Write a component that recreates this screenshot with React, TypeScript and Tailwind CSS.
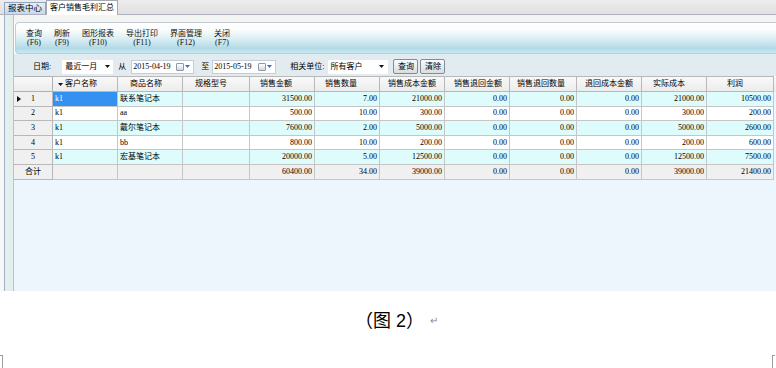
import React from "react";

const serif = "font-['Liberation_Serif','Noto_Sans_CJK_SC',serif]";

const cols = [
  { t: "客户名称", h: "pl-[5px]", sort: true, num: false },
  { t: "商品名称", h: "pl-[12px]", num: false },
  { t: "规格型号", h: "pl-[12px]", num: false },
  { t: "销售金额", h: "pl-[10px]", num: true },
  { t: "销售数量", h: "pl-[10px]", num: true },
  { t: "销售成本金额", h: "pl-[8px]", num: true },
  { t: "销售退回金额", h: "pl-[9px]", num: true },
  { t: "销售退回数量", h: "pl-[7px]", num: true },
  { t: "退回成本金额", h: "pl-[8px]", num: true },
  { t: "实际成本", h: "pl-[11px]", num: true },
  { t: "利润", h: "pl-[20px]", num: true },
];

const gridCols =
  "grid grid-cols-[39px_65px_65px_67px_65px_65px_65px_65px_67px_65px_65px_67px]";

const rows = [
  ["k1", "联系笔记本", "", "31500.00", "7.00", "21000.00", "0.00", "0.00", "0.00", "21000.00", "10500.00"],
  ["k1", "aa", "", "500.00", "10.00", "300.00", "0.00", "0.00", "0.00", "300.00", "200.00"],
  ["k1", "戴尔笔记本", "", "7600.00", "2.00", "5000.00", "0.00", "0.00", "0.00", "5000.00", "2600.00"],
  ["k1", "bb", "", "800.00", "10.00", "200.00", "0.00", "0.00", "0.00", "200.00", "600.00"],
  ["k1", "宏基笔记本", "", "20000.00", "5.00", "12500.00", "0.00", "0.00", "0.00", "12500.00", "7500.00"],
];
const total = ["", "", "", "60400.00", "34.00", "39000.00", "0.00", "0.00", "0.00", "39000.00", "21400.00"];

const tools = [
  ["查询", "(F6)"],
  ["刷新", "(F9)"],
  ["图形报表", "(F10)"],
  ["导出打印", "(F11)"],
  ["界面管理", "(F12)"],
  ["关闭", "(F7)"],
];

function Caret({ blue }: { blue?: boolean }) {
  return (
    <svg width="5" height="3" viewBox="0 0 5 3" className="shrink-0">
      <path d="M0 0h5L2.5 3z" fill={blue ? "#3a6fc8" : "#111"} />
    </svg>
  );
}

function DateBox({ v, w }: { v: string; w: string }) {
  return (
    <div className={`flex items-center h-[14px] bg-white border border-[#c4ccd6] ${w}`}>
      <span className="flex-1 pl-[1px]">{v}</span>
      <span className="w-[8px] h-[8px] border border-[#8e98a6] rounded-[1px] bg-[linear-gradient(to_bottom,#ffffff,#d4d8de)]" />
      <span className="ml-[1px] mr-[3px]">
        <Caret blue />
      </span>
    </div>
  );
}

function Row({ i, cells, sel, sum }: { i: number; cells: string[]; sel?: boolean; sum?: boolean }) {
  const bg = sum ? "bg-[#f0f0f0]" : i % 2 === 0 ? "bg-[#dffcfc]" : "bg-white";
  return (
    <div className={`${gridCols} h-[14.6px]`}>
      <div className="flex items-center bg-[#f0f0f0] border-r border-b border-[#b8b8b8]">
        <span className="w-[11px] pl-[3px] flex items-center">
          {sel && (
            <svg width="4" height="6" viewBox="0 0 4 6">
              <path d="M0 0l4 3-4 3z" fill="#111" />
            </svg>
          )}
        </span>
        <span className="flex-1 text-center">{sum ? "合计" : i + 1}</span>
        <span className="w-[11px]" />
      </div>
      {cells.map((c, j) => (
        <div
          key={j}
          className={`flex items-center whitespace-nowrap overflow-hidden border-r border-b border-[#c6c6c6] ${
            cols[j].num ? "justify-end pr-[2px]" : "pl-[2px]"
          } ${sel && j === 0 ? "bg-[#3391f2] text-white" : bg}`}
        >
          {c}
        </div>
      ))}
    </div>
  );
}

export default function App() {
  return (
    <div className={`w-[776px] h-[368px] bg-white overflow-hidden text-[8px] leading-none text-black ${serif}`}>
      {/* window */}
      <div className="h-[291px] flex flex-col">
        {/* tabs */}
        <div className="h-[15px] flex items-end bg-[linear-gradient(to_bottom,#ececec,#e0e0e0)] border-b border-[#aeb2bc] shrink-0">
          <div className="ml-[4px] h-[12px] px-[3px] flex items-center bg-[linear-gradient(to_bottom,#e6eef8,#c8d8ec)] border border-b-0 border-[#8fa3c2] text-[8.5px]">
            报表中心
          </div>
          <div className="h-[15px] -mb-px px-[3px] flex items-center bg-white border border-b-0 border-[#a4a8b0]">
            客户销售毛利汇总
          </div>
        </div>

        <div className="flex-1 flex min-h-0">
          {/* left strip */}
          <div className="flex shrink-0">
            <div className="w-[4px] bg-[#f6f8f8]" />
            <div className="w-px bg-[#a2b2c2]" />
            <div className="w-[8px] bg-[#e3eeee]" />
            <div className="w-px bg-[#b8c2c8]" />
          </div>

          <div className="flex-1 flex flex-col min-w-0">
            <div className="h-[7px] bg-[#f3f5f5] shrink-0" />

            {/* toolbar */}
            <div className="h-[32px] ml-px shrink-0 rounded-l-[4px] border-t border-l border-b border-[#c4ccd2] bg-[linear-gradient(to_bottom,#ffffff_0%,#fbfdfd_22%,#d8edf3_55%,#b4d9e4_84%,#c4ebf4_100%)] flex gap-[12px] pl-[10px] pt-[6px]">
              {tools.map(([a, b]) => (
                <div key={a} className="flex flex-col items-center leading-[9px] text-[#111]">
                  <span>{a}</span>
                  <span>{b}</span>
                </div>
              ))}
            </div>

            {/* filter */}
            <div className="h-[22px] shrink-0 bg-[#e2ecf0] flex items-center pt-[3px]">
              <span className="ml-[19px]">日期:</span>
              <div className="ml-[11px] w-[51px] h-[14px] bg-white flex items-center pl-[3px] pr-[3px]">
                <span className="flex-1">最近一月</span>
                <Caret />
              </div>
              <span className="ml-[5px]">从</span>
              <DateBox v="2015-04-19" w="ml-[5px] w-[63px]" />
              <span className="ml-[7px]">至</span>
              <DateBox v="2015-05-19" w="ml-[3px] w-[64px]" />
              <span className="ml-[14px]">相关单位:</span>
              <div className="ml-[4px] w-[60px] h-[14px] bg-white flex items-center pl-[2px] pr-[4px]">
                <span className="flex-1">所有客户</span>
                <Caret />
              </div>
              <button className="ml-[5px] w-[25px] h-[15px] flex items-center justify-center rounded-[2px] border border-[#7f8c9a] bg-[linear-gradient(to_bottom,#fafafa,#dcdcdc)]">
                查询
              </button>
              <button className="ml-[2px] w-[25px] h-[15px] flex items-center justify-center rounded-[2px] border border-[#7f8c9a] bg-[linear-gradient(to_bottom,#fafafa,#dcdcdc)]">
                清除
              </button>
            </div>

            {/* grid */}
            <div className="flex-1 bg-[#eef6fd] overflow-hidden">
              <div className={`${gridCols} h-[16px] bg-[linear-gradient(to_bottom,#fafafa,#ebebeb)]`}>
                <div className="border-r border-b border-t border-[#b0b0b0]" />
                {cols.map((c) => (
                  <div
                    key={c.t}
                    className={`flex items-center whitespace-nowrap border-r border-b border-t border-[#b8b8b8] ${c.h}`}
                  >
                    {c.sort && (
                      <span className="mr-[2px]">
                        <Caret />
                      </span>
                    )}
                    {c.t}
                  </div>
                ))}
              </div>
              {rows.map((r, i) => (
                <Row key={i} i={i} cells={r} sel={i === 0} />
              ))}
              <Row i={5} cells={total} sum />
            </div>
          </div>
        </div>
      </div>

      {/* caption */}
      <div className="mt-[20px] h-[20px] flex items-center pl-[355px] font-['Liberation_Sans','Noto_Sans_CJK_SC',sans-serif]">
        <span className="text-[18px] leading-[20px]">（图 2）</span>
        <span className="ml-[6px] text-[10px] text-[#8a8a8a]">↵</span>
      </div>

      <div className="mt-[24px] flex justify-between">
        <span className="w-[3px] h-[13px] border-t border-r border-[#9c9c9c]" />
        <span className="w-[3px] h-[13px] mr-px border-t border-l border-[#9c9c9c]" />
      </div>
    </div>
  );
}
